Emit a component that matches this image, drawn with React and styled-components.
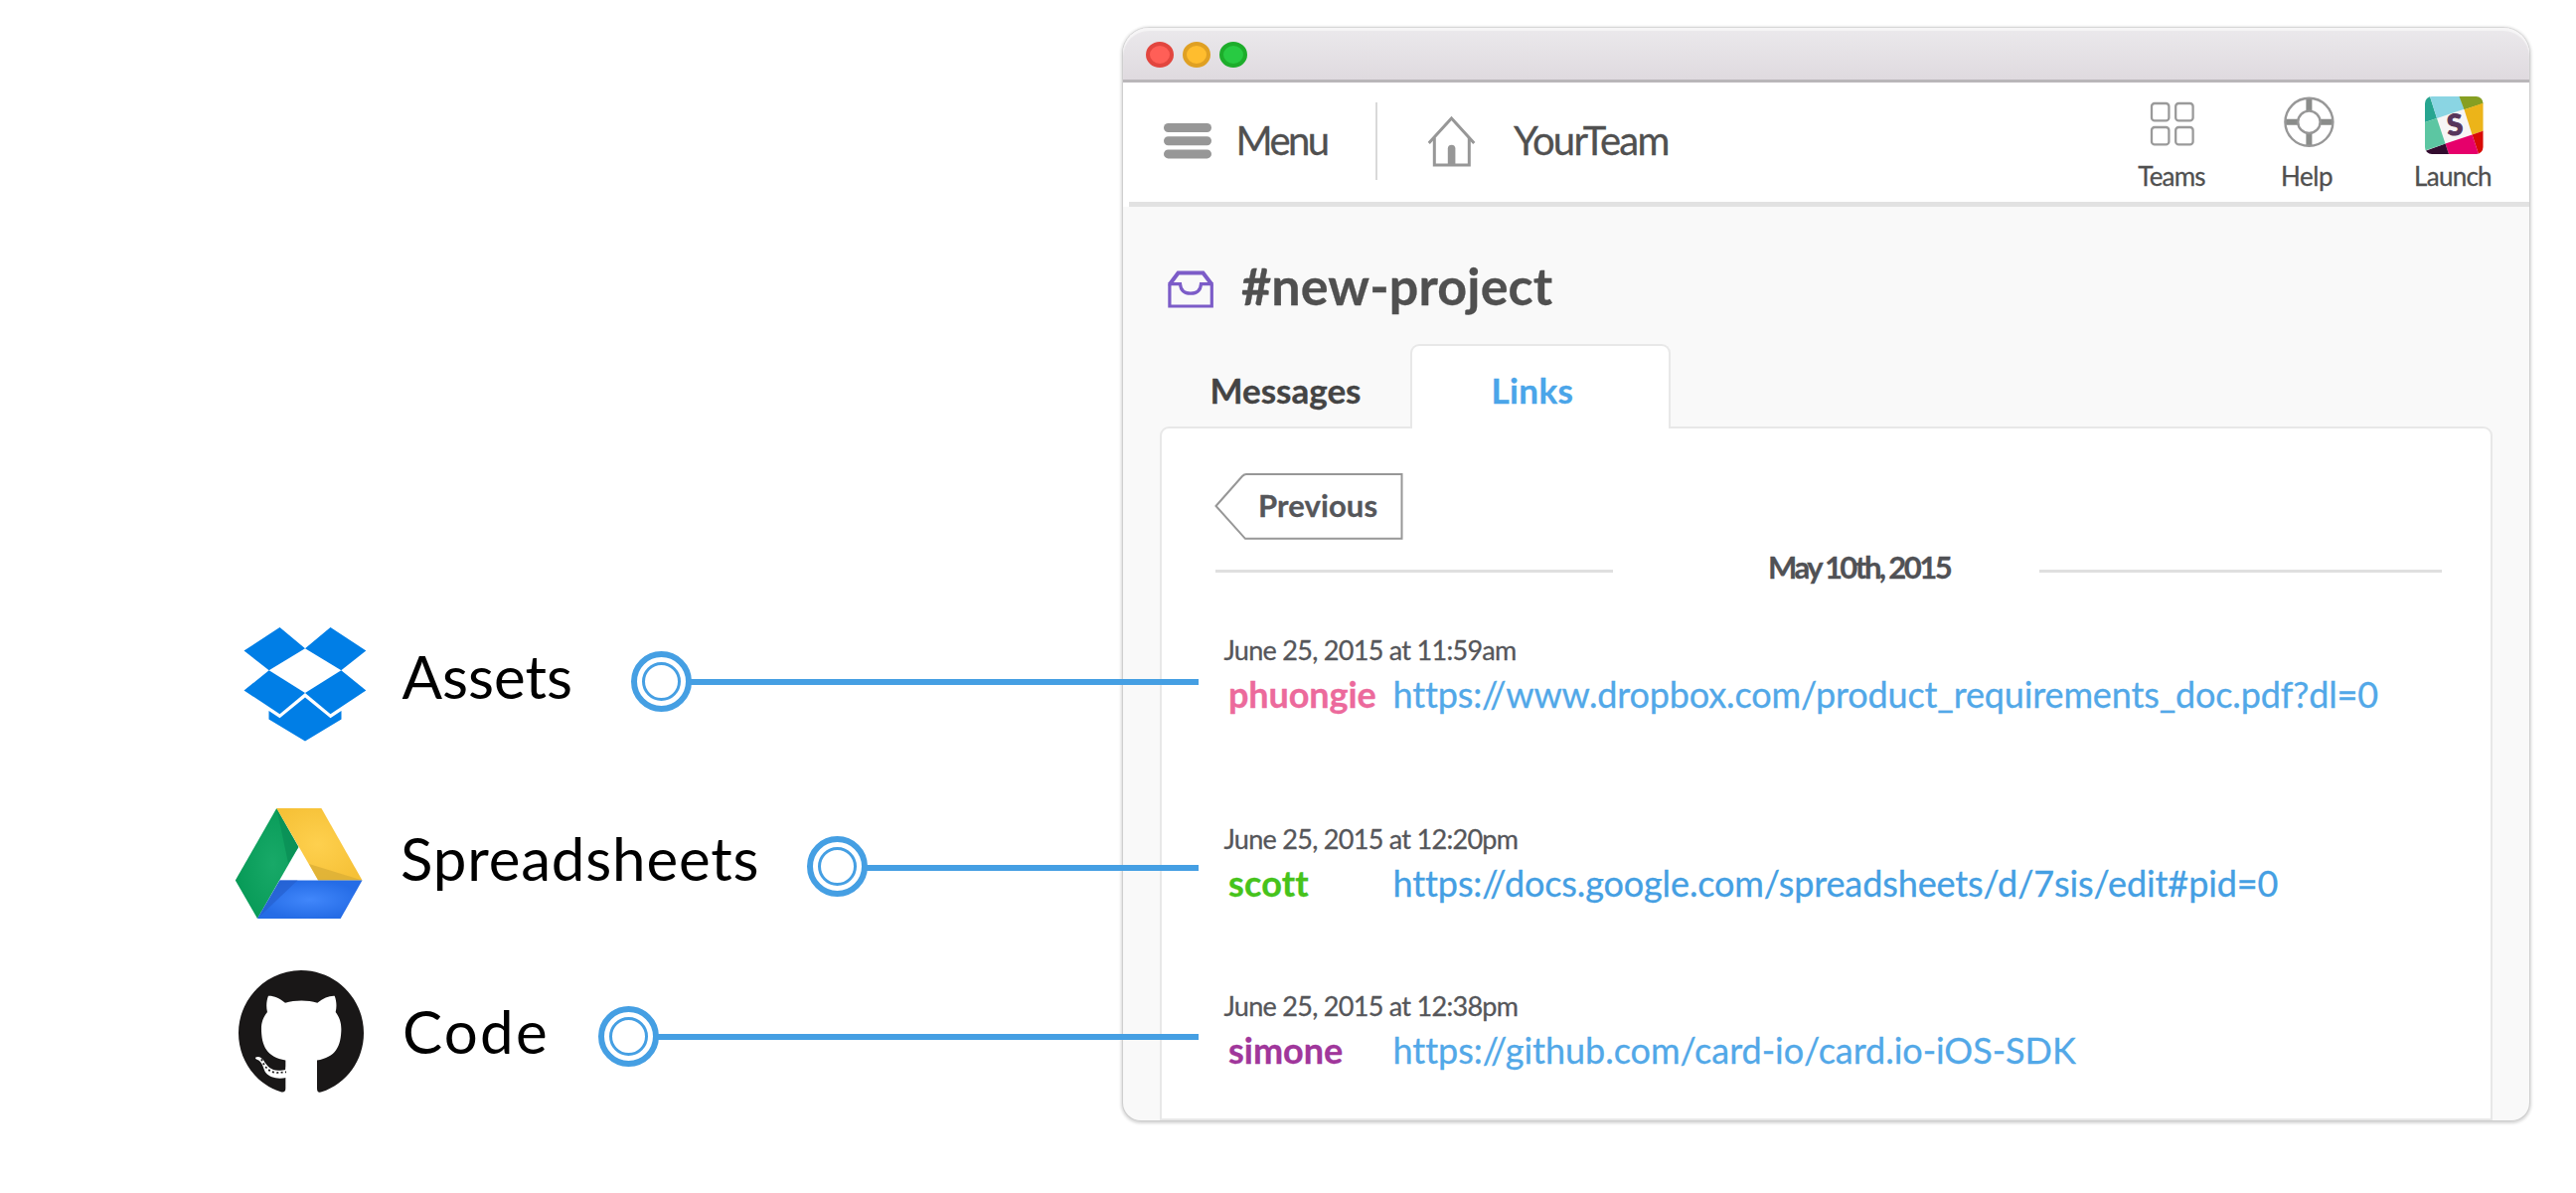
import React from "react";
import styled, { createGlobalStyle } from "styled-components";

const GlobalStyle = createGlobalStyle`
  *, *::before, *::after { box-sizing: border-box; }
  html, body { margin: 0; background: #fff; }
  body {
    font-family: Lato, "Open Sans", sans-serif;
    font-variant-ligatures: none;
  }
  svg { display: block; flex: none; }
`;

const Page = styled.main`
  display: flex;
  width: 2592px;
  height: 1200px;
  overflow: hidden;
  background: #fff;
`;

/* ---------- callouts ---------- */

const Callouts = styled.aside`
  z-index: 1;
  flex: none;
  width: 1206px;
  padding: 615px 0 0 220px;
`;

const Callout = styled.div`
  display: flex;
  align-items: center;
  height: 141px;
  margin-bottom: ${(p) => p.$after || 0}px;
`;

const CalloutLabel = styled.span`
  width: ${(p) => p.$width}px;
  padding-left: ${(p) => p.$inset}px;
  padding-bottom: ${(p) => p.$lift}px;
  flex: none;
  color: #000;
  font-size: 60px;
  line-height: 72px;
  letter-spacing: ${(p) => p.$tracking}px;
  white-space: nowrap;
`;

const Marker = styled.span`
  display: grid;
  place-items: center;
  flex: none;
  width: 61px;
  height: 61px;
  border: 6px solid #459fe3;
  border-radius: 50%;

  &::after {
    content: "";
    width: 39px;
    height: 39px;
    border: 3px solid #459fe3;
    border-radius: 50%;
  }
`;

const Connector = styled.span`
  flex: 1;
  height: 6px;
  margin-left: -1px;
  margin-top: ${(p) => p.$drop}px;
  background: #459fe3;
`;

/* ---------- window ---------- */

const Window = styled.section`
  display: flex;
  flex-direction: column;
  flex: none;
  width: 1415px;
  height: 1099px;
  margin: 28px 0 0 -76px;
  border-radius: 26px 26px 18px 18px;
  background: #f9f9f9;
  box-shadow: 0 0 0 1px rgba(0, 0, 0, 0.06), 0 1px 3px 2px rgba(0, 0, 0, 0.16);
  -webkit-text-stroke: 0.3px currentColor;
`;

const TitleBar = styled.div`
  display: flex;
  align-items: center;
  gap: 9px;
  flex: none;
  height: 55px;
  padding: 2px 0 0 23px;
  border-bottom: 3px solid #b9b6b9;
  border-radius: 26px 26px 0 0;
  background: linear-gradient(#ebe9ec, #dfdadf);
  box-shadow: inset 0 3px 1px #f6f5f6;
`;

const Light = styled.span`
  width: 28px;
  height: 26px;
  border: 4px solid ${(p) => p.$rim};
  border-radius: 50%;
  background: ${(p) => p.$fill};
`;

const Header = styled.header`
  display: flex;
  align-items: center;
  flex: none;
  height: 120px;
  padding: 0 31px 2px 41px;
  background: #fff;
`;

const HeaderRule = styled.div`
  flex: none;
  height: 5px;
  border-left: 6px solid #fff;
  background: #e2e2e2;
`;

const HeaderText = styled.span`
  padding-bottom: 2px;
  margin-left: ${(p) => p.$left}px;
  width: ${(p) => p.$width}px;
  color: #505050;
  font-size: 40px;
  line-height: 48px;
  letter-spacing: ${(p) => p.$tracking}px;
  white-space: nowrap;
`;

const Separator = styled.span`
  width: 2px;
  height: 78px;
  margin-right: 51px;
  background: #d9d9d9;
`;

const Actions = styled.nav`
  display: flex;
  align-self: flex-start;
  margin-left: auto;
  padding-top: 13px;
`;

const Action = styled.a`
  display: flex;
  flex-direction: column;
  align-items: center;
  width: 90px;
  margin-left: ${(p) => p.$gap || 0}px;
  color: #505050;
  font-size: 26px;
  line-height: 32px;
  letter-spacing: ${(p) => p.$tracking}px;
  white-space: nowrap;

  svg { margin-bottom: 5px; }
`;

const ActionLabel = styled.span`
  padding-right: 2px;
`;

/* ---------- channel ---------- */

const Body = styled.div`
  display: flex;
  flex-direction: column;
  flex: 1;
  padding: 0 37px 0 37px;
`;

const ChannelRow = styled.div`
  display: flex;
  align-items: center;
  height: 138px;
  padding-top: 19px;
`;

const Channel = styled.h1`
  margin: 0 0 0 -1px;
  color: #505050;
  font-size: 52px;
  line-height: 62px;
  font-weight: 700;
  letter-spacing: 0.15px;
`;

const Tabs = styled.div`
  display: flex;
  z-index: 1;
  height: 85px;
  margin-bottom: -2px;
`;

const Tab = styled.a`
  width: ${(p) => p.$width}px;
  height: 85px;
  padding-left: ${(p) => p.$left}px;
  border: 2px solid ${(p) => (p.$active ? "#e8e8e8" : "transparent")};
  border-bottom: 0;
  border-radius: 9px 9px 0 0;
  background: ${(p) => (p.$active ? "#fff" : "transparent")};
  color: ${(p) => (p.$active ? "#4aa5e9" : "#444")};
  font-size: 35px;
  font-weight: 700;
  line-height: 88px;
  letter-spacing: ${(p) => (p.$active ? 0.4 : 0)}px;
`;

const Panel = styled.div`
  flex: 1;
  padding: 44px 49px 0 52px;
  border: 2px solid #e8e8e8;
  border-radius: 9px 9px 0 0;
  background: #fff;
`;

const Previous = styled.a`
  position: relative;
  display: block;
  width: 191px;
  height: 68px;
  padding-left: 45px;
  color: #55565a;
  font-size: 31px;
  font-weight: 700;
  line-height: 67px;
  letter-spacing: 0.1px;

  svg { position: absolute; inset: 0; }
`;

const PreviousLabel = styled.span`
  position: relative;
`;

const DateDivider = styled.div`
  display: flex;
  align-items: center;
  height: 54px;
  padding-left: 2px;
  color: #505155;
  font-size: 31px;
  font-weight: 700;
  letter-spacing: -2.5px;
  word-spacing: -0.4px;
  white-space: nowrap;
`;

const DateText = styled.span`
  width: 429px;
  padding-left: 156px;
`;

const Rule = styled.span`
  width: ${(p) => p.$width}px;
  height: 3px;
  margin-top: 8px;
  background: #dfdfdf;
`;

const Entry = styled.article`
  height: 82px;
  margin: ${(p) => p.$before}px 0 0 10.5px;
`;

const Stamp = styled.div`
  height: 38px;
  color: #55565a;
  font-size: 27px;
  line-height: 32px;
  letter-spacing: -0.71px;
  white-space: nowrap;
`;

const EntryLine = styled.div`
  display: flex;
  padding-left: 4.5px;
  font-size: 36px;
  line-height: 44px;
  white-space: nowrap;
`;

const Author = styled.b`
  flex: none;
  width: 165.5px;
  color: ${(p) => p.$color};
  letter-spacing: ${(p) => p.$tracking}px;
`;

const Url = styled.a`
  color: ${(p) => p.$color};
  letter-spacing: ${(p) => p.$tracking}px;
`;

/* ---------- drawings ---------- */

const DropboxLogo = () => (
  <svg width="180" height="141" viewBox="220 615 180 141" fill="#007ee6">
    <path d="M281.5 631 307 652.3 270.7 674.3 245.5 654.5Z" />
    <path d="M332.5 631 307 652.3 343.3 674.3 368.3 654.5Z" />
    <path d="M270.7 674.3 307 697 281.5 718.3 245.5 694.5Z" />
    <path d="M343.3 674.3 307 697 332.5 718.3 368.3 694.5Z" />
    <path d="M307 701.5 332.5 722.3 343.5 715V723.5L307 745.5 270.5 723.5V715L281.5 722.3Z" />
  </svg>
);

const DriveLogo = () => (
  <svg width="180" height="141" viewBox="220 801 180 141">
    <defs>
      <radialGradient id="green" cx="0.6" cy="0.5" r="0.6">
        <stop offset="0" stopColor="#18a968" />
        <stop offset="1" stopColor="#079a57" />
      </radialGradient>
      <radialGradient id="yellow" cx="0.48" cy="0.5" r="0.6">
        <stop offset="0" stopColor="#fed04e" />
        <stop offset="1" stopColor="#f6c137" />
      </radialGradient>
      <radialGradient id="blue" cx="0.5" cy="0.5" r="0.5">
        <stop offset="0" stopColor="#4187fb" />
        <stop offset="1" stopColor="#256ce6" />
      </radialGradient>
    </defs>
    <path d="M278.3 813 300.4 852 259 924 236.8 885.5Z" fill="url(#green)" />
    <path d="M278.3 813 300.4 852 290 868Z" fill="#0a8d55" opacity="0.75" />
    <path d="M278.3 813H323.4L364.5 885.5H320.2Z" fill="url(#yellow)" />
    <path d="M311 869 364.5 885.5H320.2Z" fill="#d9ad36" opacity="0.75" />
    <path d="M281.5 885.5H364.5L342.7 924H259Z" fill="url(#blue)" />
    <path d="M281.5 885.5H299.5L259 924Z" fill="#255fce" opacity="0.7" />
  </svg>
);

const GithubLogo = () => (
  <svg width="180" height="141" viewBox="220 972 180 141">
    <g transform="translate(230 966) scale(0.33333)">
      <path
        fill="#191717"
        d="M219 30C115 30 30 115 30 219C30 302 83 373 158 397C168 399 172 395 172 386V300H267V386C267 396 271 400 281 397C356 373 408 302 408 219C408 115 323 30 219 30Z"
      />
      <path
        fill="#fff"
        d="M120 107C135 106 154 114 171 128C202 119 238 119 268 128C286 114 304 106 320 107C326 122 327 140 323 156C336 173 341 190 340 213C338 268 316 297 256 303C263 311 267 322 267 340L262 352H176L172 340C172 321 175 311 183 303C123 296 101 268 99 213C98 190 103 173 117 156C113 140 114 122 120 107Z"
      />
      <path
        fill="#fff"
        d="M81 293C90 288 99 292 106 302C117 320 128 331 150 332C160 332 166 331 174 329V354C150 359 125 355 113 340C105 329 104 311 92 302C86 299 80 298 81 293Z"
      />
      <path
        d="M99 298C109 322 122 338 146 339L174 337"
        fill="none"
        stroke="#191717"
        strokeWidth="5"
        strokeDasharray="6 7"
      />
    </g>
  </svg>
);

const MenuIcon = () => (
  <svg width="48" height="36" fill="#979797">
    <rect width="48" height="9" y="0" rx="4.5" />
    <rect width="48" height="9" y="13.2" rx="4.5" />
    <rect width="48" height="9" y="26.4" rx="4.5" />
  </svg>
);

const HomeIcon = () => (
  <svg width="48" height="51" fill="none" stroke="#979797" strokeWidth="3">
    <path d="M.7 27 23.5 2 46.3 27" />
    <path d="M6.3 21.5V49H41.3V21.5" />
    <path d="M19.8 49V32.5a3.8 3.8 0 0 1 7.6 0V49Z" fill="#979797" stroke="none" />
  </svg>
);

const TeamsIcon = () => (
  <svg width="60" height="60" fill="none" stroke="#9a9a9a" strokeWidth="2.3">
    {[9, 33.2].map((x) =>
      [8, 32].map((y) => (
        <rect key={`${x}-${y}`} x={x} y={y} width="17.4" height="17.4" rx="3" />
      ))
    )}
  </svg>
);

const HelpIcon = () => (
  <svg width="60" height="60" fill="none" stroke="#979797" strokeWidth="2.4">
    <g stroke="#8a8c8a" strokeWidth="6">
      <path d="M31.4 3V15M31.4 38V50M8 26.8H20M43 26.8H55" />
    </g>
    <circle cx="31.4" cy="26.8" r="24" />
    <circle cx="31.4" cy="26.8" r="11.2" />
  </svg>
);

const LaunchIcon = () => (
  <svg width="60" height="60" viewBox="-1 -1 60 60">
    <clipPath id="tile">
      <rect width="58.5" height="58" rx="7" />
    </clipPath>
    <g clipPath="url(#tile)">
      <rect width="59" height="58" fill="#f7f5f5" />
      <path fill="#27a590" d="M0 0H5L12 22 0 26Z" />
      <path fill="#8ad5e3" d="M5 0H35L39.5 12.8 12 22Z" />
      <path fill="#869f22" d="M34.5 0H59V7L39.5 13.2Z" />
      <path fill="#ecb419" d="M39.5 13.2 59 6.6V34.5L47.5 38.5Z" />
      <path fill="#d80a05" d="M47.5 38.5 59 34.5V58H54Z" />
      <path fill="#e6006b" d="M20.5 47.5 47.5 38.5 54 58H24Z" />
      <path fill="#330c2f" d="M0 55 20.5 47.5 24 58H0Z" />
      <path fill="#5cc6a2" d="M0 26 12 22 20.5 47.5 0 54.5Z" />
      <text
        x="29.8"
        y="38.8"
        textAnchor="middle"
        fontFamily="Lato, sans-serif"
        fontWeight="900"
        fontSize="29"
        fill="#57365b"
        stroke="#57365b"
        strokeWidth="1"
        transform="rotate(-5 29.8 29)"
      >
        S
      </text>
    </g>
  </svg>
);

const InboxIcon = () => (
  <svg width="83" height="120" fill="none" stroke="#7c5cc8" strokeWidth="3.2">
    <path d="M9.9 58.5V81H52.3V58.5" />
    <path d="M9.9 59 18.5 47.5H43.5L52.3 59" strokeWidth="4" />
    <path d="M8.6 58.6H20.5C21 65 25 68.2 31 68.2S41 65 41.5 58.6H53.6" />
  </svg>
);

/* ---------- data ---------- */

const callouts = [
  { label: "Assets", Logo: DropboxLogo, width: 235, inset: 4.5, lift: 11, tracking: 0, drop: 1, after: 45 },
  { label: "Spreadsheets", Logo: DriveLogo, width: 412, inset: 3, lift: 17, tracking: 0.84, drop: 3, after: 30 },
  { label: "Code", Logo: GithubLogo, width: 202, inset: 5, lift: 12, tracking: 2.3, drop: 1, after: 0 },
];

const entries = [
  {
    stamp: "June 25, 2015 at 11:59am",
    author: "phuongie",
    color: "#ec6a9c",
    authorTracking: -0.1,
    url: "https://www.dropbox.com/product_requirements_doc.pdf?dl=0",
    link: "#52a8e8",
    tracking: -0.14,
    before: 41,
  },
  {
    stamp: "June 25, 2015 at 12:20pm",
    author: "scott",
    color: "#46c31b",
    authorTracking: 0.2,
    url: "https://docs.google.com/spreadsheets/d/7sis/edit#pid=0",
    link: "#459fe3",
    tracking: -0.11,
    before: 108,
  },
  {
    stamp: "June 25, 2015 at 12:38pm",
    author: "simone",
    color: "#a0369b",
    authorTracking: 0,
    url: "https://github.com/card-io/card.io-iOS-SDK",
    link: "#52a8e8",
    tracking: -0.02,
    before: 86,
  },
];

export default function App() {
  return (
    <Page>
      <GlobalStyle />
      <Callouts>
        {callouts.map(({ label, Logo, width, inset, lift, tracking, drop, after }) => (
          <Callout key={label} $after={after}>
            <Logo />
            <CalloutLabel $width={width} $inset={inset} $lift={lift} $tracking={tracking}>
              {label}
            </CalloutLabel>
            <Marker />
            <Connector $drop={drop} />
          </Callout>
        ))}
      </Callouts>

      <Window>
        <TitleBar>
          <Light $rim="#e2463f" $fill="#ff5f57" />
          <Light $rim="#dfa023" $fill="#ffbd2e" />
          <Light $rim="#1dad2b" $fill="#28ca42" />
        </TitleBar>
        <Header>
          <MenuIcon />
          <HeaderText $left={24.5} $width={140.5} $tracking={-2.6}>
            Menu
          </HeaderText>
          <Separator />
          <HomeIcon />
          <HeaderText $left={38} $width={170} $tracking={-1.7}>
            YourTeam
          </HeaderText>
          <Actions>
            <Action $tracking={-0.8}>
              <TeamsIcon />
              <ActionLabel>Teams</ActionLabel>
            </Action>
            <Action $tracking={-0.45} $gap={46}>
              <HelpIcon />
              <ActionLabel>Help</ActionLabel>
            </Action>
            <Action $tracking={-0.74} $gap={57}>
              <LaunchIcon />
              <ActionLabel>Launch</ActionLabel>
            </Action>
          </Actions>
        </Header>
        <HeaderRule />

        <Body>
          <ChannelRow>
            <InboxIcon />
            <Channel>#new-project</Channel>
          </ChannelRow>
          <Tabs>
            <Tab $width={252} $left={48.5}>Messages</Tab>
            <Tab $width={262} $left={79.5} $active>Links</Tab>
          </Tabs>
          <Panel>
            <Previous>
              <svg width="191" height="68" fill="none" stroke="#979797" strokeWidth="2">
                <path d="M2.5 34 29 4Q31 2 33 2H189.5V66.8H32Z" />
              </svg>
              <PreviousLabel>Previous</PreviousLabel>
            </Previous>
            <DateDivider>
              <Rule $width={400} />
              <DateText>May 10th, 2015</DateText>
              <Rule $width={405} />
            </DateDivider>
            {entries.map((e) => (
              <Entry key={e.author} $before={e.before}>
                <Stamp>{e.stamp}</Stamp>
                <EntryLine>
                  <Author $color={e.color} $tracking={e.authorTracking}>
                    {e.author}
                  </Author>
                  <Url $color={e.link} $tracking={e.tracking}>
                    {e.url}
                  </Url>
                </EntryLine>
              </Entry>
            ))}
          </Panel>
        </Body>
      </Window>
    </Page>
  );
}
